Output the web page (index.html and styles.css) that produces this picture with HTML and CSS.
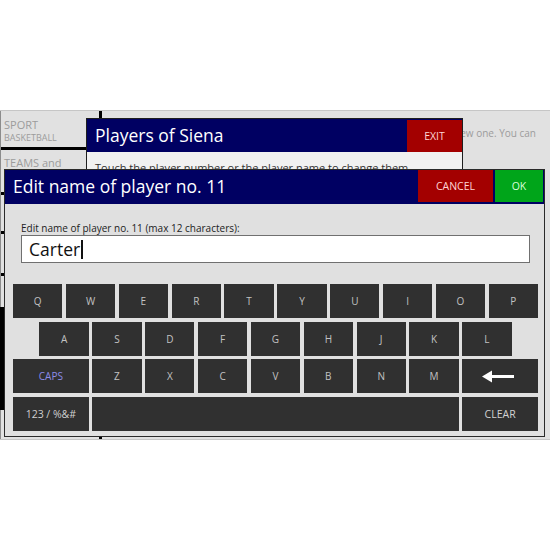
FILE: index.html
```html
<!DOCTYPE html>
<html lang="en">
<head>
<meta charset="utf-8">
<title>Edit player name</title>
<link rel="stylesheet" href="styles.css">
</head>
<body>
<div class="screen">
  <aside class="sidebar">
    <div class="cell cell-sport">
      <div class="cell-title">SPORT</div>
      <div class="cell-sub">BASKETBALL</div>
    </div>
    <div class="cell cell-teams">
      <div class="cell-title">TEAMS and</div>
    </div>
    <div class="cell cell-three"></div>
    <div class="cell cell-four"></div>
    <div class="sel-bar"></div>
  </aside>
  <div class="divider"></div>
  <main class="content">
    <p class="intro">Touch a team to select it or add a new one. You can</p>
  </main>

  <section class="dialog players">
    <header class="dlg-head">
      <h2 class="dlg-title">Players of Siena</h2>
      <div class="btn btn-red btn-exit">EXIT</div>
    </header>
    <div class="players-body">
      <p class="players-hint">Touch the player number or the player name to change them</p>
    </div>
  </section>

  <section class="dialog edit">
    <header class="dlg-head">
      <h2 class="dlg-title">Edit name of player no. 11</h2>
      <div class="btn btn-red btn-cancel">CANCEL</div>
      <div class="btn btn-green btn-ok">OK</div>
    </header>
    <div class="edit-body">
      <label class="field-label">Edit name of player no. 11 (max 12 characters):</label>
      <div class="field"><span class="field-text">Carter</span><span class="caret"></span></div>
      <div class="keyboard">
        <div class="key">Q</div>
        <div class="key">W</div>
        <div class="key">E</div>
        <div class="key">R</div>
        <div class="key">T</div>
        <div class="key">Y</div>
        <div class="key">U</div>
        <div class="key">I</div>
        <div class="key">O</div>
        <div class="key">P</div>
        <div class="key key-a">A</div>
        <div class="key">S</div>
        <div class="key">D</div>
        <div class="key">F</div>
        <div class="key">G</div>
        <div class="key">H</div>
        <div class="key">J</div>
        <div class="key">K</div>
        <div class="key">L</div>
        <div class="key key-wide key-caps">CAPS</div>
        <div class="key">Z</div>
        <div class="key">X</div>
        <div class="key">C</div>
        <div class="key">V</div>
        <div class="key">B</div>
        <div class="key">N</div>
        <div class="key">M</div>
        <div class="key key-wide key-back">
          <svg class="back-icon" width="32" height="13" viewBox="0 0 32 13">
            <polygon points="0,6.5 10,0.5 10,12.5" fill="#ffffff"/>
            <rect x="8" y="5" width="24" height="3" fill="#ffffff"/>
          </svg>
        </div>
        <div class="key key-wide key-num">123 / %&amp;#</div>
        <div class="key key-space"></div>
        <div class="key key-wide key-clear">CLEAR</div>
      </div>
    </div>
  </section>
</div>
</body>
</html>
```
FILE: styles.css
```css
* {
  box-sizing: border-box;
}

html, body {
  margin: 0;
  padding: 0;
  background: #ffffff;
}

body {
  font-family: "Open Sans", "Noto Sans", sans-serif;
  width: 550px;
  height: 550px;
  overflow: hidden;
}

.screen {
  position: relative;
  margin-top: 110px;
  width: 550px;
  height: 330px;
  background: #e1e1e1;
  border-top: 1px solid #c6c6c6;
  border-bottom: 1px solid #c6c6c6;
  display: flex;
}

/* sidebar */
.sidebar {
  width: 99px;
  flex: none;
  border-left: 1px solid #8c8c8c;
  display: flex;
  flex-direction: column;
}

.cell {
  border-bottom: 3px solid #000000;
  padding-left: 3px;
  color: #9c9c9c;
}

.cell-sport {
  height: 39px;
  padding-top: 7px;
}

.cell-teams {
  height: 45px;
  padding-top: 6px;
}

.cell-three {
  height: 39px;
}

.cell-four {
  height: 42px;
}

.cell-title {
  font-size: 11px;
  line-height: 14px;
}

.cell-sub {
  font-size: 9px;
  line-height: 12px;
}

.sel-bar {
  margin-top: 31px;
  margin-left: -1px;
  width: 4px;
  height: 103px;
  background: #000000;
}

.divider {
  width: 3px;
  flex: none;
  background: #000000;
}

.content {
  flex: 1;
  min-width: 0;
}

.intro {
  margin: 15px 0 0;
  padding-right: 14px;
  font-size: 10px;
  line-height: 14px;
  color: #9c9c9c;
  white-space: nowrap;
  text-align: right;
}

/* dialogs */
.dialog {
  position: absolute;
  border: 1px solid #1e1e1e;
  display: flex;
  flex-direction: column;
}

.dlg-head {
  height: 34px;
  flex: none;
  background: #000062;
  display: flex;
  align-items: stretch;
}

.dlg-title {
  margin: 0;
  flex: 1;
  padding-left: 8px;
  font-size: 17.5px;
  font-weight: 400;
  line-height: 32px;
  color: #ffffff;
  white-space: nowrap;
}

.btn {
  display: flex;
  align-items: center;
  justify-content: center;
  font-size: 10.5px;
}

.btn-red {
  background: #a30000;
  color: #ffd6d6;
}

.btn-green {
  background: #00a51a;
  color: #d9ffd9;
}

/* players dialog */
.players {
  left: 86px;
  top: 7px;
  width: 377px;
  height: 200px;
  background: #f1f1f1;
}

.players .dlg-head {
  height: 33px;
}

.btn-exit {
  width: 55px;
  margin-top: 1px;
}

.players-body {
  padding: 8px 8px;
}

.players-hint {
  margin: 0;
  font-size: 11px;
  line-height: 15px;
  color: #333333;
  white-space: nowrap;
}

/* edit dialog */
.edit {
  left: 4px;
  top: 58px;
  width: 541px;
  height: 268px;
  background: #e0e0e0;
  border-color: #2a2a2a;
}

.edit .dlg-head {
  padding: 0 1px 2px 0;
  gap: 2px;
}

.edit .dlg-title {
  line-height: 33px;
}

.btn-cancel {
  width: 75px;
}

.btn-ok {
  width: 48px;
}

.edit-body {
  padding: 17px 6px 5px 8px;
}

.field-label {
  display: block;
  margin: 0 8px;
  font-size: 10px;
  line-height: 14px;
  color: #222222;
}

.field {
  margin: 0 8px;
  height: 28px;
  background: #ffffff;
  border: 1.5px solid #707070;
  display: flex;
  align-items: center;
  padding-left: 7px;
}

.field-text {
  font-size: 17.5px;
  line-height: 24px;
  color: #111111;
}

.caret {
  width: 1.5px;
  height: 19px;
  background: #111111;
  margin-left: 1px;
}

/* keyboard */
.keyboard {
  margin-top: 21px;
  display: grid;
  grid-template-columns: repeat(20, 1fr);
  grid-auto-rows: 34px;
  column-gap: 3.6px;
  row-gap: 3.7px;
}

.key {
  grid-column: span 2;
  background: #303030;
  color: #c2c2c2;
  font-size: 10px;
  display: flex;
  align-items: center;
  justify-content: center;
}

.key-a {
  grid-column: 2 / span 2;
}

.key-wide {
  grid-column: span 3;
}

.key-space {
  grid-column: span 14;
}

.key-caps {
  color: #8c8ce6;
}

.key-num {
  font-size: 10.5px;
  color: #cfcfcf;
}

.key-clear {
  font-size: 10.5px;
  color: #d2d2d2;
}

.back-icon {
  display: block;
  margin-left: -4px;
}
```
